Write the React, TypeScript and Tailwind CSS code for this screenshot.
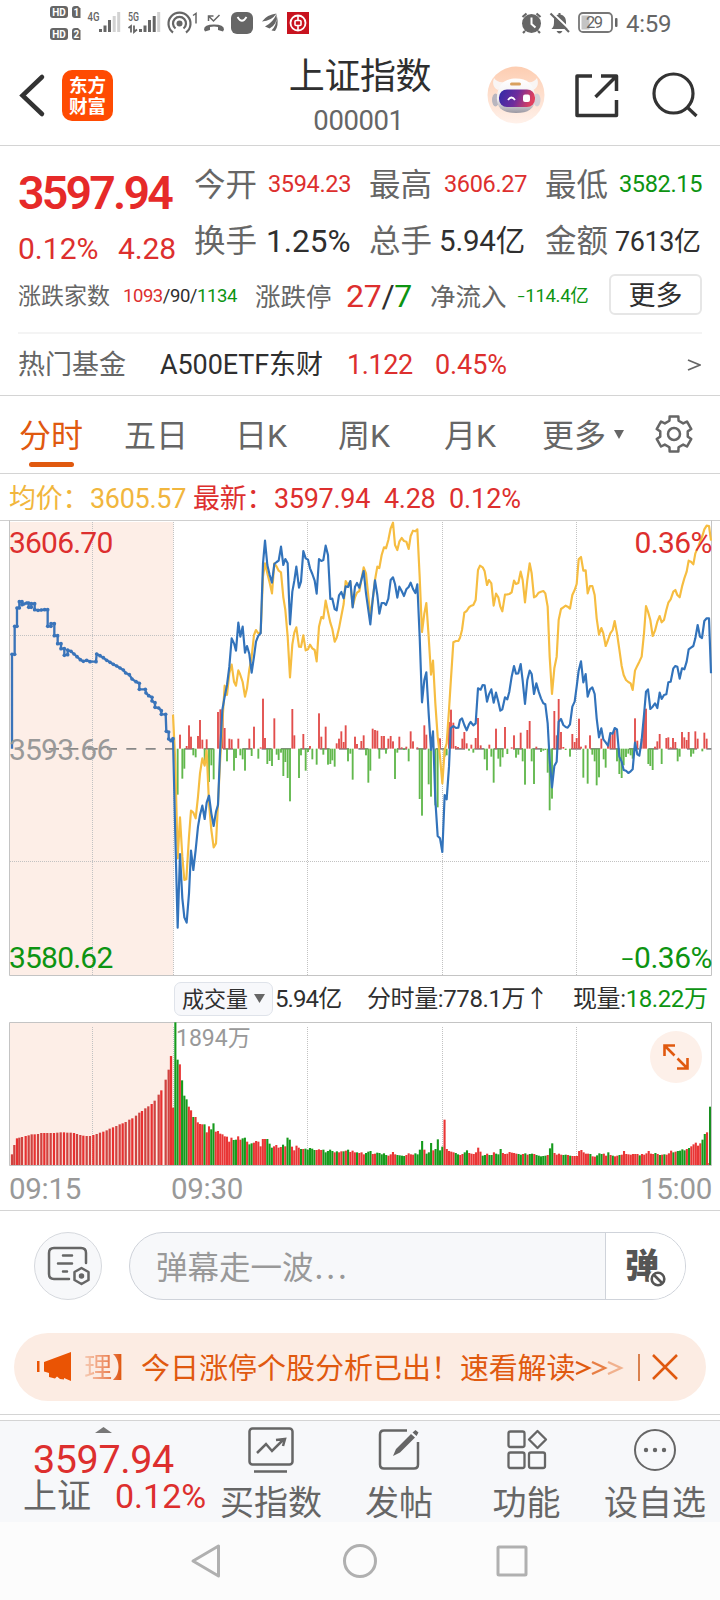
import React from "react";

/* Chart coordinates are in thirds of a pixel. */
const shift = (dx: number, s: string) =>
  s
    .trim()
    .split(/\s+/)
    .map((p) => {
      const [x, y] = p.split(",").map(Number);
      return [x + dx, y] as [number, number];
    });
const join = (pts: [number, number][]) => pts.map((p) => p.join(",")).join(" ");

const AUCTION = shift(
  0,
  `36,716 36,433 44,433 44,349 51,349 51,294 58,294 58,275 66,275 66,284 72,282 80,279 86,279 86,292 94,292 94,281 104,281 104,299 114,301 124,300 134,299 143,299 143,349 153,349 153,341 163,341 163,377 173,377 173,401 183,401 183,416 193,416 193,436 203,434 203,420 213,424 222,432 231,440 241,449 250,454 260,451 270,455 288,455 290,432 300,437 310,443 320,451 330,457 340,463 350,468 360,474 370,480 377,489 388,494 396,507 408,515 418,520 418,538 436,538 438,549 446,557 456,562 456,573 465,578 465,592 476,594 484,602 484,613 497,613 499,664 506,666 506,687 513,692 519,686`
);

const PRICE = [
  ...shift(
    0,
    `519,686 526,980 533,1253 540,1032 547,1165 553,1222 560,1238 567,1150 573,1022 580,1080 587,1020 594,950 600,915 607,887 614,927 620,878 627,857 634,910 641,948 648,905 654,885 660,730 667,600 674,560 681,525 688,470 695,385 702,400 708,422 715,338`
  ),
  ...shift(
    720,
    `1,380 8,350 15,428 21,408 28,432 35,488 42,440 48,395 55,377 62,370 69,160 75,92 82,165 89,195 96,218 103,162 110,156 116,152 123,110 130,165 136,147 143,160 150,343 157,245 163,212 169,170 177,233 183,215 190,123 197,145 204,149 210,175 217,192 224,212 230,251 237,147 244,153 250,150 257,107 264,135 271,267 277,266 284,297 290,301 297,256 304,246 311,265 317,229 324,231 331,213 338,292 345,230 351,219 358,233 371,183 378,250 391,343 398,270 405,211 412,255 418,311 425,279 432,279 438,285 445,266 452,210 459,202 465,222 472,263 478,230 485,243 492,258 499,238 506,231 512,218 519,237 526,249 532,223 539,380 546,577 553,510 559,487 566,610 573,720 579,664 586,870 593,978 600,985 607,1026 614,855 620,868 627,770 632,655 640,648 648,654 655,653 660,630 666,625 673,645 680,661 687,643 692,636 700,646 707,640 714,535`
  ),
  ...shift(
    1440,
    `2,539 8,525 14,526 21,575 27,553 34,538 41,578 48,548 55,575 61,602 67,598 75,562 82,568 88,545 95,500 102,468 108,491 115,490 122,462 128,512 135,582 142,510 149,482 155,492 162,552 169,520 176,545 183,565 190,580 196,583 203,640 209,750 216,832 223,768 230,755 236,635 243,627 250,645 257,651 263,653 270,643 277,590 284,575 290,530 296,482 303,454 310,517 317,492 323,560 330,538 337,532 344,552 350,625 357,682 364,655 370,688 377,697 384,707 391,669 398,671 404,654 411,658 418,740 425,755 431,780 438,782 445,789 452,784 458,778 465,698 472,733 478,737 485,690 492,615 498,545 504,538 511,597 518,590 525,580 532,594 539,548 545,567 552,555 559,553 565,517 572,515 580,475 586,468 592,470 599,506 606,475 613,478 620,455 626,418 633,413 640,408 646,385 653,345 660,380 666,384 673,333 680,325 687,325 693,490`
  ),
];

const AVERAGE = [
  ...shift(
    0,
    `519,614 526,760 533,1045 540,922 547,1040 553,1110 559,1108 567,980 573,902 580,908 587,925 594,860 600,790 607,745 614,767 620,722 627,880 634,960 641,1012 648,1000 654,880 660,760 667,640 674,527 681,555 688,490 695,464 702,515 708,527 715,481`
  ),
  ...shift(
    720,
    `0,492 8,516 15,560 21,535 28,478 35,440 42,375 48,360 55,370 62,368 69,200 75,160 82,190 89,218 96,250 103,160 110,170 116,182 123,187 130,262 136,300 143,380 150,502 157,403 163,368 169,352 177,410 183,411 190,376 197,421 204,418 210,404 217,415 224,420 230,454 237,350 244,321 250,325 257,272 264,306 271,338 277,357 284,395 290,383 297,355 304,318 311,282 317,213 324,225 331,215 338,290 345,262 351,248 358,243 371,172 378,190 391,318 398,270 405,210 412,170 418,174 425,135 432,112 438,115 445,90 452,55 459,38 465,105 472,120 478,95 485,84 492,93 499,95 506,117 512,78 519,62 526,64 532,58 539,200 546,366 553,310 559,279 566,380 573,494 579,452 586,580 593,680 600,740 607,820 614,720 620,700 627,600 632,520 640,397 648,393 655,393 660,383 666,360 673,308 680,303 687,292 692,288 700,285 707,270 714,180`
  ),
  ...shift(
    1440,
    `0,167 8,172 14,184 21,225 27,210 34,220 41,287 48,251 55,262 61,290 67,304 75,254 82,253 88,252 95,247 102,212 108,222 115,219 122,185 128,210 135,277 142,210 149,160 155,190 162,262 169,258 176,248 183,245 190,243 196,250 203,290 209,440 216,552 223,475 230,440 236,330 243,297 250,292 257,287 263,290 270,296 277,255 284,240 290,222 296,148 303,141 310,182 317,181 323,250 330,228 337,228 344,255 350,325 357,374 364,354 370,370 377,408 384,390 391,370 398,360 404,333 411,370 418,418 425,468 431,495 438,510 445,516 452,520 458,540 465,482 472,467 478,455 485,440 492,370 498,288 504,305 511,330 518,378 525,362 532,335 539,318 545,337 552,330 559,300 565,278 572,268 580,245 586,240 592,255 599,262 606,230 613,205 620,185 626,152 633,155 640,163 646,130 655,110 668,75 673,58 680,47 687,48 693,92`
  ),
];

const MOMENTUM = [
  ...shift(
    0,
    `533,-138 540,42 547,-90 553,-60 560,8 567,70 573,36 580,-20 587,-26 594,38 600,86 607,27 614,-40 620,28 627,-100 634,-50 641,-92 654,110 661,118 668,118 674,62 681,-38 688,30 695,28 702,-66 708,-28 715,30`
  ),
  ...shift(
    720,
    `1,-20 8,-32 15,-66 28,30 35,-22 42,66 55,-30 62,4 69,150 75,32 82,-46 89,-37 96,-52 103,91 110,-18 116,-34 123,-12 130,-82 136,-40 143,-88 150,-158 157,119 163,40 177,-88 183,-20 190,44 197,-66 204,-10 210,8 217,-32 230,-48 237,106 244,36 250,-18 257,66 264,-48 271,-46 277,-35 284,-54 290,16 297,30 304,52 311,20 317,70 324,-38 331,-15 338,-93 345,36 351,14 364,23 371,40 378,-20 385,-102 391,-66 398,60 405,56 412,54 418,-30 425,38 432,38 438,-15 445,30 452,38 459,22 465,-91 472,-12 478,36 485,4 492,-4 499,6 506,-38 512,52 519,22 532,4 539,-151 546,-201 553,70 559,42 566,-107 573,-144 586,-170 593,-176 600,31 614,-24 620,-20 627,80 633,117 640,78 647,8 654,5 667,30 673,50 680,16 687,-6 694,12 700,-12 707,32 714,92`
  ),
  ...shift(
    1440,
    `2,10 14,-32 21,-65 28,12 34,-24 41,-102 48,60 55,-30 61,-54 68,-26 75,65 82,-16 95,4 102,40 108,-27 115,-18 122,48 128,-38 135,-108 142,56 149,83 155,-38 162,-106 169,6 183,-10 190,-6 196,-4 203,-72 209,-185 216,-150 223,113 230,40 236,149 243,50 250,5 257,-4 270,-24 277,44 284,20 290,32 297,90 303,6 310,-87 317,10 323,-105 330,40 337,-18 344,-38 350,-110 357,-86 364,30 371,-32 377,-57 384,8 391,40 398,44 404,56 411,-38 418,-76 425,-88 431,-50 438,-25 445,-15 452,-20 458,-30 465,91 472,24 485,30 492,100 498,120 505,-46 511,-52 518,-64 525,6 532,22 539,44 545,-46 559,32 565,34 572,4 579,32 586,20 593,-38 599,-24 606,50 613,34 620,26 626,50 633,-24 640,-15 646,52 653,30 667,-8 673,48 680,30`
  ),
];

const PRE_VOLUME = shift(
  0,
  `36,32 43,60 51,80 58,82 66,84 77,87 86,89 95,92 104,92 114,93 124,96 133,96 142,96 152,96 162,96 172,97 182,98 192,98 202,97 212,97 222,96 231,93 241,90 250,88 260,87 270,87 280,90 290,93 300,97 310,100 320,104 329,109 339,113 349,117 359,122 368,125 377,129 388,136 397,140 408,148 418,157 426,162 436,170 445,176 455,183 464,193 476,211 484,224 497,256 506,286 513,327`
);

/* One value per minute; falling minutes are negative. */
const VOLUME = [
  172, -428, -316, 302, -254, -208, -197, 175, 164, -144, 144, 128, 123, 122, -122, 98, 116, -107, -125, 100,
  102, 94, 92, 86, 85, 70, 82, -75, -76, 86, 76, -80, -82, 70, -62, -65, 67, 72, 70, 56,
  78, 78, -78, -64, -52, 56, 60, 52, 54, -61, 56, -82, -76, 55, 44, 58, 52, -48, 48, -49,
  -46, -51, -49, -45, 45, 47, 45, -46, -38, -42, -46, -42, 38, -41, 38, 41, -41, 43, -46, 39, 43,
  38, -38, 36, 38, 32, -36, -40, -42, 33, 34, -37, -36, -32, -35, -30, 28, 32, 39, 32, -30, -29, -28, -27, 30,
  35, 32, 31, -35, -32, -46, -72, 46, -34, -38, -66, 44, -48, -77, -44, -55, 136, 48, 42, 40, 38, -36,
  -32, 30, 33, -38, -44, 36, 34, 33, 38, 52, 40, -28, -30, 34, -30, -30, 38, -34, -32, -48, 36, 33,
  34, 39, 37, 36, 34, -33, -31, 33, -35, 31, -33, -34, 33, -30, -28, -26, -27, -28, 30, -50, -65, 36,
  31, 34, 31, -30, -31, 30, -28, 27, 27, 27, 42, 45, 38, 34, 34, -33, 26, 25, -29, -35, -33, 34,
  28, -38, 30, -28, 26, 28, -30, 31, 42, 33, 32, 31, 33, 33, 33, -29, 33, 31, 35, 42, 34, 33,
  -36, 33, -30, 31, -32, 31, 35, 43, -38, 40, -42, -43, -47, -44, 48, -51, 56, 62, 67, 58, 65, -76, -93, 98, 6,
];

const Momentum = () => (
  <>
    {MOMENTUM.map(([x, h], i) => (
      <rect
        key={i}
        x={x - 2.8}
        y={h > 0 ? 716 - h : 716}
        width={5.6}
        height={Math.abs(h)}
        fill={h > 0 ? "#e24e4c" : "#62b84d"}
      />
    ))}
  </>
);

const PriceChart = () => (
  <svg className="block h-[456px] w-full" viewBox="0 30 2160 1368">
    <rect x="29" y="36" width="491" height="1360" fill="#fdeee7" />
    <g stroke="#c2c2c2" strokeWidth="3" strokeDasharray="3 3" fill="none">
      <path d="M277.5 36V1395M520.5 36V1395M922.5 36V1395M1327.5 36V1395M1729.5 36V1395" />
      <path d="M30 376.5H2130M30 1054.5H2130" />
    </g>
    <path d="M0 31.5H2160" stroke="#cfcfcf" strokeWidth="3" />
    <path d="M28.5 31V1396.500H2134.500V31" stroke="#c4c4c4" strokeWidth="3" fill="none" />
    <path d="M147 716.500H2134" stroke="#888" strokeWidth="5" strokeDasharray="30 28" />
    <Momentum />
    <polyline points={join(AVERAGE)} fill="none" stroke="#f6bd41" strokeWidth="6.500" strokeLinejoin="round" />
    <polyline points={join(AUCTION)} fill="none" stroke="#3a74ba" strokeWidth="7" strokeLinejoin="round" />
    {AUCTION.slice(1).map(([x, y], i) => (
      <circle key={i} cx={x} cy={y} r="5.500" fill="#3a74ba" />
    ))}
    <polyline points={join(PRICE)} fill="none" stroke="#3273bb" strokeWidth="6.500" strokeLinejoin="round" />
  </svg>
);

const VolumeChart = () => (
  <svg className="block h-[146px] w-full" viewBox="0 153 2160 438">
    <rect x="29" y="157" width="491" height="428" fill="#fdeee7" />
    <g stroke="#c2c2c2" strokeWidth="3" strokeDasharray="3 3" fill="none">
      <path d="M277.500 171V585M520.500 171V585M922.500 171V585M1327.500 171V585M1729.500 171V585" />
    </g>
    <path d="M28.500 157.500H2134.500V586.500H28.500Z" stroke="#c4c4c4" strokeWidth="3" fill="none" />
    {PRE_VOLUME.map(([x, h], i) => (
      <rect key={i} x={x - 3.4} y={585 - h} width={6.8} height={h} fill={i % 3 === 2 ? "#e93030" : "#cf4340"} />
    ))}
    {VOLUME.map((v, i) => (
      <rect
        key={i}
        x={516.2 + i * 6.73}
        y={585 - Math.abs(v)}
        width={6.3}
        height={Math.abs(v)}
        fill={v > 0 ? "#e93535" : "#159a1c"}
      />
    ))}
    <rect x="2127" y="410" width="6" height="175" fill="#188f20" />
  </svg>
);

const StatusIcons = () => (
  <svg className="block h-[46px] w-[264px]" viewBox="48 0 264 46" fill="#666">
    {[12, 34].map((y, i) => (
      <g key={y}>
        <rect x="50" y={y - 6} width="18" height="12" rx="3" />
        <path d={`M72 ${y - 3}q0-3 3-3h3l2.500 2.500v9.500h-5.500q-3 0-3-3z`} />
        <g fill="#fff" fontFamily="Roboto, sans-serif" fontWeight="700" fontSize="10" textAnchor="middle">
          <text x="59" y={y + 3.6}>HD</text>
          <text x="76.300" y={y + 3.6}>{i + 1}</text>
        </g>
      </g>
    ))}
    <g fontFamily="'Roboto', sans-serif" fontWeight="500" fontSize="12">
      <text x="87.500" y="21" textLength="12" lengthAdjust="spacingAndGlyphs">4G</text>
      <text x="128" y="21" textLength="11" lengthAdjust="spacingAndGlyphs">5G</text>
    </g>
    <rect x="99" y="29" width="3" height="3" /><rect x="103.500" y="25.500" width="3" height="6.500" /><rect x="108" y="20" width="3" height="12" />
    <rect x="112.700" y="16" width="3" height="16" fill="#d2d2d2" /><rect x="117.200" y="12" width="3" height="20" fill="#d2d2d2" />
    <path d="M128.500 28l2.500-2v6.500M134 25.500v6.500l3-2.500" fill="none" stroke="#666" strokeWidth="1.800" />
    <rect x="139" y="29" width="3" height="3" /><rect x="143.500" y="25.500" width="3" height="6.500" /><rect x="148" y="20" width="3" height="12" /><rect x="152.700" y="16" width="3" height="16" />
    <rect x="157.200" y="12" width="3" height="20" fill="#d2d2d2" />
    <g fill="none" stroke="#666" strokeWidth="2.200">
      <path d="M173 32.500a11 11 0 1 1 13 0M175.500 28.500a6.500 6.500 0 1 1 8 0" />
    </g>
    <circle cx="179.500" cy="23.500" r="3" />
    <path d="M193 15.500l3-2v10" fill="none" stroke="#666" strokeWidth="1.500" />
    <path d="M204 29.500q0-5 10-5t10 5l-1 2-5-1.500v-3q-4-1-8 0v3l-5 1.500z" />
    <path d="M208.500 21v-5h5M209 16.500l4.500 4.500 6-6" fill="none" stroke="#666" strokeWidth="1.500" />
    <rect x="231" y="12" width="22" height="22" rx="6" />
    <path d="M237.500 17q4.500 7.500 9 0" fill="none" stroke="#fff" strokeWidth="1.800" />
    <path d="M262 21.500q5-7 14.500-8-5 7.500-14.500 8zM265 26.500q8-4 11.500-12.500 1.500 10-7 14.500zM271.500 30.500q5-5 5.500-14 2 9-2 14.500z" />
    <rect x="287" y="12" width="22" height="22" fill="#c8131f" />
    <circle cx="298" cy="23" r="7.500" fill="none" stroke="#fff" strokeWidth="1.800" />
    <rect x="295" y="20.500" width="6" height="5" rx="1" fill="none" stroke="#fff" strokeWidth="1.600" />
    <path d="M298 15.500v5M298 25.500v5" stroke="#fff" strokeWidth="1.600" />
  </svg>
);

const StatusRight = () => (
  <svg className="block h-[46px] w-[98px]" viewBox="520 0 98 46" fill="#666">
    <circle cx="531.500" cy="23.500" r="9.500" />
    <path d="M522.500 17l4-3.500M540.500 17l-4-3.500M525 31l-2 2M538 31l2 2" stroke="#666" strokeWidth="2.200" />
    <path d="M531.500 17.500v6.500l4 3.500" stroke="#fff" strokeWidth="2" fill="none" />
    <path d="M551.500 29c2.500-2 2.500-5 2.500-8 0-4 2-6 4.500-6.500v-1.500h2v1.500c4 1 5.500 4 5.500 7.500 0 3 0 5 2 7zM556.500 31h6q-3 5-6 0z" />
    <path d="M551.500 12l19 18" stroke="#fff" strokeWidth="2" />
    <path d="M550.500 13.500l18.500 18.500" stroke="#666" strokeWidth="2.200" />
    <rect x="579" y="13" width="33" height="19" rx="4" fill="none" stroke="#777" strokeWidth="1.800" />
    <rect x="581.500" y="15.500" width="8" height="14" fill="#c4c4c4" />
    <rect x="615" y="18" width="2.500" height="9" rx="1" />
    <text x="594.500" y="28" textAnchor="middle" fontFamily="'Roboto', sans-serif" fontSize="16.500" textLength="17">29</text>
  </svg>
);

const Robot = () => (
  <svg className="block h-[58px] w-[58px]" viewBox="0 0 58 58">
    <defs>
      <linearGradient id="halo" x1="0" y1="0" x2="0" y2="1">
        <stop offset="0" stopColor="#fdcdb1" />
        <stop offset="1" stopColor="#fff1ea" />
      </linearGradient>
      <linearGradient id="visor" x1="0" y1="0" x2="1" y2="0.200">
        <stop offset="0" stopColor="#2f2aa8" />
        <stop offset="0.550" stopColor="#6f2c9c" />
        <stop offset="1" stopColor="#e0405e" />
      </linearGradient>
      <linearGradient id="shell" x1="0" y1="0" x2="0" y2="1">
        <stop offset="0" stopColor="#fff" />
        <stop offset="0.600" stopColor="#f1eef0" />
        <stop offset="1" stopColor="#9b98a2" />
      </linearGradient>
    </defs>
    <circle cx="29" cy="29" r="28.500" fill="url(#halo)" />
    <path d="M7 12q-3 9 4 12l7-8q-8 1-11-4zM50 12q3 9-4 12l-6-8q7 1 10-4z" fill="#f9f5f4" />
    <ellipse cx="8.500" cy="34" rx="3.500" ry="6.500" fill="#b9b6bf" />
    <ellipse cx="50" cy="34" rx="3.500" ry="6.500" fill="#d3d0d6" />
    <path d="M10 30C11 18 18 12.500 29 12.500s18 5.500 19 17.500c1 12-6 17-19 17S9 42 10 30z" fill="url(#shell)" />
    <rect x="23" y="16.500" width="11" height="3" rx="1.500" fill="#d9a15f" />
    <rect x="12" y="23.500" width="36" height="17.500" rx="8" fill="url(#visor)" />
    <path d="M21 34q3.500-5 7 0" fill="none" stroke="#fff" strokeWidth="1.800" />
    <rect x="36" y="28.500" width="7" height="7.500" rx="2" fill="#fff" />
  </svg>
);

const Gear = () => {
  const pts: string[] = [];
  for (let i = 0; i < 6; i++) {
    const base = -90 + i * 60;
    [[-14, 18], [14, 18], [19, 14], [41, 14]].forEach(([a, r]) => {
      const t = ((base + a) * Math.PI) / 180;
      pts.push(`${20 + r * Math.cos(t)},${20 + r * Math.sin(t)}`);
    });
  }
  return (
    <svg className="block h-10 w-10" viewBox="0 0 40 40" fill="none" stroke="#666" strokeWidth="2.500" strokeLinejoin="round">
      <polygon points={pts.join(" ")} />
      <circle cx="20" cy="20" r="6" />
    </svg>
  );
};

const Caret = ({ className }: { className: string }) => (
  <svg className={className} viewBox="0 0 10 8" preserveAspectRatio="none">
    <path d="M0 0h10L5 8z" fill="#666" />
  </svg>
);

/* Latin figures set on the baseline of the surrounding Chinese text. */
const N = ({ children, className = "" }: { children: React.ReactNode; className?: string }) => (
  <span className={`font-['Roboto','Noto_Sans_CJK_SC',sans-serif] leading-[0] ${className}`}>{children}</span>
);

const cell = "shrink-0 whitespace-nowrap";
const RED = "text-[#dd2f2e]";
const GREEN = "text-[#0d9412]";

export default function App() {
  return (
    <div className="flex h-[1600px] w-[720px] flex-col overflow-hidden bg-white font-['Noto_Sans_CJK_SC',sans-serif] leading-none text-[#2f2f2f]">
      <div className="flex h-[46px] shrink-0 items-center pl-12">
        <StatusIcons />
        <div className="ml-[208px]"><StatusRight /></div>
        <span className="ml-[8px] pb-[3px] text-[24px] tracking-[-0.3px] text-[#666]"><N>4:59</N></span>
      </div>

      <header className="flex h-[100px] shrink-0 border-b border-[#d4d4d4]">
        <svg className="ml-4 mt-[26px] h-[46px] w-[34px]" viewBox="0 0 34 46" fill="none" stroke="#333" strokeWidth="4.500">
          <path d="M26 5L6.500 23.500 26 42" strokeLinejoin="miter" strokeLinecap="round" />
        </svg>
        <div className="ml-3 mt-6 flex h-[51px] w-[51px] flex-col items-center justify-center gap-[2px] rounded-[10px] bg-[#ff4b02] pb-[2px] text-[18.500px] font-bold leading-[19px] text-white">
          <span>东方</span>
          <span>财富</span>
        </div>
        <div className="ml-[151px] flex w-[192px] flex-col items-center">
          <h1 className="mt-[9px] whitespace-nowrap text-[36px] leading-[36px] tracking-[-0.4px]">上证指数</h1>
          <span className="-ml-[3px] mt-[14px] text-[27.500px] leading-[27px] tracking-[-0.4px] text-[#666]"><N>000001</N></span>
        </div>
        <div className="ml-[31px] mt-[20px]"><Robot /></div>
        <svg className="ml-[27px] mt-[25px] h-[50px] w-[48px]" viewBox="572 71 48 50" fill="none" stroke="#333" strokeWidth="3.500" strokeLinejoin="round">
          <path d="M592 76H577V115.500H616.500V100M601 76H616.500V91M616 76.500L595.500 97" />
        </svg>
        <svg className="ml-[30px] mt-[24px] h-[50px] w-[50px]" viewBox="650 70 50 50" fill="none" stroke="#333" strokeWidth="3.200">
          <circle cx="673.500" cy="93.500" r="19.500" />
          <path d="M687 107l9.500 9" />
        </svg>
      </header>

      <section className="flex h-[250px] shrink-0 flex-col border-b border-[#d4d4d4] px-[18px]">
        <div className="flex h-[128px] shrink-0">
          <div className={`w-[176px] shrink-0 ${RED}`}>
            <div className="mt-[13px] flex h-[60px] items-center text-[46.500px] font-semibold tracking-[-2.800px] text-[#e62a29]"><span className={cell}><N>3597.94</N></span></div>
            <div className="mt-[5px] flex h-11 items-center text-[30px]">
              <span className={`${cell} w-[100px]`}><N>0.12%</N></span>
              <span className={`${cell} tracking-[-0.1px]`}><N>4.28</N></span>
            </div>
          </div>
          <div className="shrink-0">
            <div className="mt-[15px] flex h-11 items-center text-[31.500px] text-[#666]">
              <span className={`${cell} w-[74px]`}>今开</span>
              <span className={`${cell} w-[101px] text-[23.500px] tracking-[-0.35px] ${RED}`}><N>3594.23</N></span>
              <span className={`${cell} w-[75px]`}>最高</span>
              <span className={`${cell} w-[101px] text-[23.500px] tracking-[-0.35px] ${RED}`}><N>3606.27</N></span>
              <span className={`${cell} w-[74px]`}>最低</span>
              <span className={`${cell} text-[23.500px] tracking-[-0.35px] ${GREEN}`}><N>3582.15</N></span>
            </div>
            <div className="mt-3 flex h-11 items-center text-[31.500px] text-[#666]">
              <span className={`${cell} w-[72px]`}>换手</span>
              <span className={`${cell} w-[103px] text-[31.500px] text-[#2f2f2f]`}><N>1.25%</N></span>
              <span className={`${cell} w-[70px]`}>总手</span>
              <span className={`${cell} w-[106px] text-[29.500px] tracking-[-0.2px] text-[#2f2f2f]`}><N>5.94</N>亿</span>
              <span className={`${cell} w-[70px]`}>金额</span>
              <span className={`${cell} text-[27px] tracking-[-0.4px] text-[#2f2f2f]`}><N>7613</N>亿</span>
            </div>
          </div>
        </div>
        <div className="flex h-[41px] shrink-0 items-center text-[#666]">
          <span className={`${cell} w-[105px] text-[23px]`}>涨跌家数</span>
          <span className={`${cell} w-[132px] text-[18.500px] tracking-[-0.45px]`}>
            <N className={RED}>1093</N><N className="text-[#2f2f2f]">/90/</N><N className={GREEN}>1134</N>
          </span>
          <span className={`${cell} w-[91px] text-[25.500px]`}>涨跌停</span>
          <span className={`${cell} w-[84px] pb-[3px] text-[32px] tracking-[-0.3px]`}>
            <N className={RED}>27</N><N className="text-[#2f2f2f]">/</N><N className={GREEN}>7</N>
          </span>
          <span className={`${cell} w-[87px] text-[25.500px]`}>净流入</span>
          <span className={`${cell} w-[92px] text-[18.500px] tracking-[-0.3px] ${GREEN}`}><N className="text-[15px]">−</N><N>114.4</N>亿</span>
          <span className="flex h-[41px] w-[93px] shrink-0 items-center justify-center rounded-[6px] border-2 border-[#e6e6e6] pb-[3px] text-[27px] text-[#2f2f2f]">更多</span>
        </div>
        <div className="mt-[17px] h-[2px] w-[684px] shrink-0 bg-[#f4f4f4]" />
        <div className="flex flex-1 items-center pb-[5px] text-[27px] text-[#666]">
          <span className={`${cell} w-[142px]`}>热门基金</span>
          <span className={`${cell} w-[187px] tracking-[-0.1px] text-[#2f2f2f]`}><N>A500ETF</N>东财</span>
          <span className={`${cell} w-[88px] tracking-[-0.4px] ${RED}`}><N>1.122</N></span>
          <span className={`${cell} tracking-[-0.1px] ${RED}`}><N>0.45%</N></span>
          <svg className="ml-auto mr-px mt-[5px] h-[14px] w-[14px]" viewBox="0 0 14 14" fill="none" stroke="#666" strokeWidth="1.800"><path d="M1 2l12 5L1 12" /></svg>
        </div>
      </section>

      <nav className="flex h-[78px] shrink-0 border-b border-[#d4d4d4] pl-[19px] text-[32px] text-[#666]">
        <div className="flex w-[105px] shrink-0 flex-col text-[#e0590f]">
          <span className="mt-[21px] whitespace-nowrap">分时</span>
          <span className="ml-[10px] mt-[13px] h-[5px] w-[45px] rounded-full bg-[#e0590f]" />
        </div>
        <span className={`${cell} mt-[21px] w-[111px]`}>五日</span>
        <span className={`${cell} mt-[21px] w-[103px]`}>日<N>K</N></span>
        <span className={`${cell} mt-[21px] w-[106px]`}>周<N>K</N></span>
        <span className={`${cell} mt-[21px] w-[98px]`}>月<N>K</N></span>
        <span className={`${cell} mt-[21px] w-[72px]`}>更多</span>
        <Caret className="mt-[34px] h-[9px] w-[10px]" />
        <div className="ml-[30px] mt-[18px]"><Gear /></div>
      </nav>

      <div className={`flex h-[46px] shrink-0 items-center pb-[2px] pl-[9px] text-[27px] tracking-[-0.3px] ${RED}`}>
        <span className={`${cell} w-[81px] text-[#f1b63d]`}>均价：</span>
        <span className={`${cell} w-[103px] text-[#f1b63d]`}><N>3605.57</N></span>
        <span className={`${cell} w-[81px]`}>最新：</span>
        <span className={`${cell} w-[110px]`}><N>3597.94</N></span>
        <span className={`${cell} w-[65px]`}><N>4.28</N></span>
        <span className={`${cell} tracking-[-0.1px]`}><N>0.12%</N></span>
      </div>

      <div className="relative h-[456px] shrink-0 text-[30px] tracking-[-0.8px]">
        <PriceChart />
        <span className={`absolute left-[9px] top-[5px] ${RED}`}><N>3606.70</N></span>
        <span className="absolute left-[9px] top-[212px] text-[#999]"><N>3593.66</N></span>
        <span className={`absolute left-[9px] top-[420px] ${GREEN}`}><N>3580.62</N></span>
        <span className={`absolute right-[8px] top-[5px] tracking-[-0.6px] ${RED}`}><N>0.36%</N></span>
        <span className={`absolute right-[8px] top-[420px] tracking-[-0.5px] ${GREEN}`}><N className="text-[25px]">−</N><N>0.36%</N></span>
      </div>

      <div className="flex h-[45px] shrink-0 items-center pl-[174px] text-[24px] text-[#2f2f2f]">
        <span className="flex h-[34px] w-[99px] shrink-0 items-center rounded-[7px] border border-[#dfe3ea] bg-[#f7f8fb] pb-[3px] pl-[7px] text-[22px]">
          成交量
          <Caret className="ml-[6px] mt-[3px] h-[9px] w-[11px]" />
        </span>
        <span className={`${cell} ml-[2px] w-[92px] pb-[3px] tracking-[-0.9px]`}><N>5.94</N>亿</span>
        <span className={`${cell} w-[206px] pb-[3px] tracking-[-0.4px]`}>分时量<N>:778.1</N>万↑</span>
        <span className={`${cell} pb-[3px] tracking-[-0.4px]`}>现量<N>:</N><span className={GREEN}><N>18.22</N>万</span></span>
      </div>

      <div className="relative h-[146px] shrink-0">
        <VolumeChart />
        <span className="absolute left-[176px] top-[4px] text-[23px] text-[#999]"><N>1894</N>万</span>
        <span className="absolute left-[650px] top-[10px] flex h-[52px] w-[52px] items-center justify-center rounded-full bg-[#fdf0e9]">
          <svg className="h-[26px] w-[26px]" viewBox="0 0 26 26" fill="none" stroke="#e0590f" strokeWidth="2.600">
            <path d="M1.500 12V1.500H12M1.500 1.500l10 10M24.500 14v10.500H14M24.500 24.500l-10-10" />
          </svg>
        </span>
      </div>

      <div className="flex h-[44px] shrink-0 items-center border-b border-[#d4d4d4] pl-[9px] pr-[8px] text-[29.500px] tracking-[-0.3px] text-[#999]">
        <span className={`${cell} w-[162px] pb-[3px]`}><N>09:15</N></span>
        <span className={`${cell} pb-[3px]`}><N>09:30</N></span>
        <span className={`${cell} ml-auto pb-[3px]`}><N>15:00</N></span>
      </div>

      <div className="mt-[21px] flex h-[68px] shrink-0 pl-[34px]">
        <div className="flex h-[68px] w-[68px] items-center justify-center rounded-full border border-[#d6d9de] bg-[#f7f8fa]">
          <svg className="h-[42px] w-[44px]" viewBox="46 1246 44 42" fill="none" stroke="#666" strokeWidth="2.500" strokeLinecap="round">
            <path d="M86 1264V1254q0-5-5-5H54q-5 0-5 5V1275q0 5 5 5H69M63 1256.500h9M58 1264.500h14M63 1272.500h4" />
            <path d="M81.500 1269l7 4v8l-7 4-7-4v-8z" strokeLinejoin="round" />
            <circle cx="81.500" cy="1277" r="1.500" fill="#666" />
          </svg>
        </div>
        <div className="ml-[27px] flex w-[557px] overflow-hidden rounded-full border border-[#cfd3da] bg-[#f7f8fa]">
          <span className="flex w-[475px] items-center whitespace-nowrap pb-px pl-[26px] text-[31.500px] text-[#999]">弹幕走一波<span className="ml-px tracking-[3px]">...</span></span>
          <div className="relative flex-1 border-l border-[#cfd3da] bg-white">
            <span className="absolute left-[19px] top-[14px] text-[34px] font-black text-[#555]">弹</span>
            <svg className="absolute left-[42px] top-[36px] h-[20px] w-[20px]" viewBox="0 0 20 20">
              <circle cx="10" cy="10" r="9.500" fill="#fff" />
              <circle cx="10" cy="10" r="6.300" fill="none" stroke="#555" strokeWidth="2.600" />
              <path d="M6 6l8 8" stroke="#555" strokeWidth="2.600" />
            </svg>
          </div>
        </div>
      </div>

      <div className="ml-[14px] mt-[33px] flex h-[68px] w-[692px] shrink-0 items-center rounded-full bg-[#fcece3] text-[29px] text-[#e0590f]">
        <svg className="ml-[22px] h-[32px] w-[36px]" viewBox="36 1352 36 32" fill="#ea5404">
          <path d="M37 1362h2.500v11H37zM44 1363L71 1353V1382L64 1379V1380.500L60 1380 57 1377.500 55 1379.500 49 1378V1374L44 1372.500z" />
        </svg>
        <span className={`${cell} ml-3 w-[57px] bg-gradient-to-r from-[#f6cdb6] to-[#e0590f] to-[65%] bg-clip-text pb-[2px] text-[28px] leading-[44px] text-transparent`}>理】</span>
        <span className={`${cell} w-[319px] pb-[2px]`}>今日涨停个股分析已出！</span>
        <span className={`${cell} w-[115px] pb-[2px] tracking-[-0.2px]`}>速看解读</span>
        <svg className="mt-px h-[14px] w-[50px]" viewBox="0 0 50 14" fill="none" stroke="#e0590f" strokeWidth="2.300">
          <path d="M1 1l13 6-13 6" /><path d="M17 1l13 6-13 6" opacity="0.750" /><path d="M33 1l13 6-13 6" opacity="0.400" />
        </svg>
        <span className="ml-[13px] h-[27px] w-[1.500px] bg-[#d9814f]" />
        <svg className="ml-[12px] h-[26px] w-[26px]" viewBox="0 0 26 26" stroke="#e0590f" strokeWidth="2.500"><path d="M1 1l24 24M25 1L1 25" /></svg>
      </div>

      <div className="mt-[13px] h-[7px] shrink-0 border-y border-[#d4d4d4]" />

      <footer className="flex h-[101px] shrink-0 bg-[#f7f8fa] text-[34px] text-[#666]">
        <div className="w-[220px] shrink-0">
          <svg className="ml-[95px] mt-[6px] h-[6px] w-[17px]" viewBox="0 0 17 6"><path d="M0 6h17L8.500 0z" fill="#777" /></svg>
          <div className={`ml-[33px] mt-[3px] text-[39.500px] leading-[40px] tracking-[-0.4px] ${RED}`}><N>3597.94</N></div>
          <div className="mt-px flex items-center pl-[23px]">
            <span className={`${cell} w-[92px]`}>上证</span>
            <span className={`${cell} ${RED}`}><N>0.12%</N></span>
          </div>
        </div>
        <div className="flex w-[102px] shrink-0 flex-col items-center">
          <svg className="mt-[5px] h-[48px] w-[48px]" viewBox="247 1426 48 48" fill="none" stroke="#666" strokeWidth="2.500">
            <rect x="249.500" y="1428.500" width="43" height="36" rx="3" />
            <path d="M257 1453l9-9 6 7 12-12M276 1440l9-1-2 7M254 1471.500h33" />
          </svg>
          <span className="mt-[10px] whitespace-nowrap">买指数</span>
        </div>
        <div className="ml-[34px] flex w-[86px] shrink-0 flex-col items-center">
          <svg className="mt-[5px] h-[48px] w-[48px]" viewBox="375 1426 48 48" fill="none" stroke="#666" strokeWidth="2.500">
            <path d="M407 1430.500H384q-4 0-4 4v30q0 4 4 4h30q4 0 4-4V1442" />
            <path d="M393 1456l3-7 15-15 4 3.500-15 15zM412.500 1432.500l3-2.500 3 2.500-2 3.500z" fill="#666" stroke="none" />
          </svg>
          <span className="mt-[10px] whitespace-nowrap">发帖</span>
        </div>
        <div className="ml-[41px] flex w-[87px] shrink-0 flex-col items-center">
          <svg className="mt-[5px] h-[48px] w-[48px]" viewBox="503 1426 48 48" fill="none" stroke="#666" strokeWidth="2.300" strokeLinejoin="round">
            <rect x="508.500" y="1431.500" width="16" height="15.500" rx="2" />
            <rect x="508.500" y="1452.500" width="16" height="15.500" rx="2" />
            <rect x="529" y="1452.500" width="16" height="15.500" rx="2" />
            <path d="M537.500 1431l8.500 8.500-8.500 8.500-8.500-8.500z" />
          </svg>
          <span className="mt-[10px] whitespace-nowrap">功能</span>
        </div>
        <div className="ml-[33px] flex w-[104px] shrink-0 flex-col items-center">
          <svg className="mt-[5px] h-[48px] w-[48px]" viewBox="631 1426 48 48" fill="none" stroke="#666" strokeWidth="2">
            <circle cx="655" cy="1450" r="20" />
            <g fill="#666" stroke="none"><circle cx="646" cy="1450" r="2.200" /><circle cx="655" cy="1450" r="2.200" /><circle cx="664" cy="1450" r="2.200" /></g>
          </svg>
          <span className="mt-[10px] whitespace-nowrap">设自选</span>
        </div>
      </footer>

      <div className="flex flex-1 items-center bg-[#fcfcfc]">
        <svg className="ml-[190px] h-[36px] w-[340px]" viewBox="190 1543 340 36" fill="none" stroke="#b0b0b0" strokeWidth="3" strokeLinejoin="round">
          <path d="M218.500 1546V1576L193 1561z" />
          <circle cx="360" cy="1561" r="15.500" />
          <rect x="498" y="1547" width="28" height="28" rx="1" />
        </svg>
      </div>
    </div>
  );
}
